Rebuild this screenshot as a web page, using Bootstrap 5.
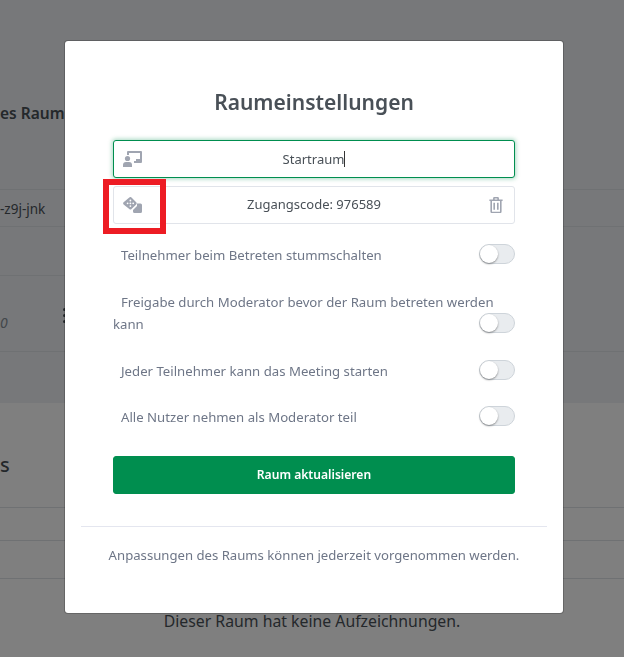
<!DOCTYPE html>
<html lang="de">
<head>
<meta charset="utf-8">
<link href="https://cdn.jsdelivr.net/npm/bootstrap@5.3.0/dist/css/bootstrap.min.css" rel="stylesheet">
<style>
html,body{height:657px;overflow:hidden}
body{background:#fff;font-family:"Noto Sans","Open Sans",sans-serif;color:#495057;font-size:14px}
.bg-page{height:657px;overflow:hidden;position:relative}
.band-a{height:403px;background:#eef1f4;padding-top:103px}
.band-title{font-size:15.5px;font-weight:600;line-height:20px;height:86px;white-space:nowrap}
.band-row{border-top:1px solid #dee2e6;height:37px;line-height:39px;white-space:nowrap;font-size:13.5px}
.band-gap{border-top:1px solid #dee2e6;height:49px}
.band-info{border-top:1px solid #dee2e6;height:76px;padding-top:36px;font-style:italic;color:#868e96;display:flex;justify-content:space-between;width:66px}
.kebab{display:flex;flex-direction:column;gap:3px;margin-top:-4px}
.kebab i{display:block;width:3px;height:3px;border-radius:50%;background:#495057}
.band-b{height:254px;padding-top:50px;position:relative}
.band-s{font-size:20px;font-weight:500;height:54px;line-height:24px}
.band-line{border-top:1px solid #dee2e6;height:33px}
.band-line2{height:38px;border-top:1px solid #dee2e6}
.band-none{border-top:1px solid #dee2e6;text-align:center;padding-top:30px;font-size:15.8px;line-height:24px}
.scrim{position:fixed;inset:0;background:rgba(0,0,0,.5);z-index:1}
.sheet{position:fixed;left:64px;top:40px;width:500px;height:574px;background:#fff;border:1px solid rgba(0,0,0,.2);background-clip:padding-box;border-radius:4px;z-index:2;padding:0 16px}
.sheet-title{font-size:21px;font-weight:600;color:#495057;text-align:center;margin:46px 0 23px;line-height:30px}
.sheet-form{padding:0 32px}
.room-field{height:38px;border:1px solid #e1e4ea;border-radius:3px;background:#fff;margin-bottom:8px;color:#495057}
.room-field.active{border-color:#008e4f;box-shadow:0 0 4px 1px rgba(0,142,79,.35)}
.room-field.active .room-text{padding-top:2px}
.room-ico{width:37px;flex:none;display:flex;justify-content:center}
.room-text{flex:1;text-align:center;font-size:13px;padding-right:37px}
.caret-bar{display:inline-block;width:1px;height:16px;background:#333;vertical-align:-3px}
.room-end{width:37px;flex:none;display:flex;justify-content:center;margin-left:-37px}
.opt{color:#6e7687;font-size:13.2px;line-height:22px;flex:1;text-indent:8px}
.opt-row{display:flex;align-items:flex-end;margin-top:25px}
.opt-row.first{margin-top:20px}
.opt-row.last{margin-top:24px}
.toggle-off{width:36px;height:20px;flex:none;border-radius:10px;background:#e9ecef;border:1px solid #ced4da;position:relative;margin-bottom:2px;margin-left:-36px}
.toggle-off::after{content:"";position:absolute;left:0;top:0;width:18px;height:18px;background:#fff;border-radius:50%;box-shadow:0 1px 2px rgba(0,0,0,.4)}
.save-btn{background:#008e4f;border-color:#008e4f;color:#fff;font-weight:600;font-size:12.1px;height:38px;border-radius:3px;width:100%;margin-top:28px}
.sheet-rule{border-top:1px solid #e4e6ef;margin:32px 0 18px;opacity:1}
.sheet-foot{text-align:center;color:#6e7687;font-size:13.15px;line-height:20px;margin:0}
.red-mark{position:fixed;left:103px;top:179px;width:63px;height:55px;border:6px solid #ed1c24;z-index:3}
</style>
</head>
<body>
<div class="bg-page">
  <div class="band-a">
    <div class="band-title">es Raum</div>
    <div class="band-row">-z9j-jnk</div>
    <div class="band-gap"></div>
    <div class="band-info"><span>0</span><span class="kebab"><i></i><i></i><i></i></span></div>
    <div class="band-gap"></div>
  </div>
  <div class="band-b">
    <div class="band-s">s</div>
    <div class="band-line"></div>
    <div class="band-line2"></div>
    <div class="band-none">Dieser Raum hat keine Aufzeichnungen.</div>
  </div>
</div>
<div class="scrim"></div>
<div class="sheet">
  <h5 class="sheet-title">Raumeinstellungen</h5>
  <div class="sheet-form">
    <div class="room-field active d-flex align-items-center">
      <span class="room-ico"><svg width="19" height="16" viewBox="0 0 19 16" fill="#a0a5b1"><path d="M5 0h13a1 1 0 0 1 1 1v10a1 1 0 0 1-1 1h-7v-2h2V8h4V2H6v2H4V1a1 1 0 0 1 1-1z"/><circle cx="4.5" cy="7.5" r="2.6"/><path d="M0 16v-2a3 3 0 0 1 3-3h3a3 3 0 0 1 3 3v2z"/></svg></span>
      <span class="room-text">Startraum<span class="caret-bar"></span></span>
    </div>
    <div class="room-field d-flex align-items-center">
      <span class="room-ico"><svg width="19" height="16" viewBox="0 0 19 16" fill="#a0a5b1"><path d="M6.300.5a1.600 1.600 0 0 1 2.200 0l4.700 4.700a1.600 1.600 0 0 1 0 2.200l-4.700 4.700a1.600 1.600 0 0 1-2.200 0L.6 7.400a1.600 1.600 0 0 1 0-2.200z"/><path d="M14 6.500h3.500A1.500 1.500 0 0 1 19 8v6.500a1.500 1.500 0 0 1-1.500 1.500h-6a1.500 1.500 0 0 1-1.500-1.500v-1.500l4-4z"/><g fill="#fff"><circle cx="7.400" cy="3.500" r=".9"/><circle cx="7.400" cy="6.300" r=".9"/><circle cx="7.400" cy="9.100" r=".9"/><circle cx="4.600" cy="6.300" r=".9"/><circle cx="10.200" cy="6.300" r=".9"/></g></svg></span>
      <span class="room-text">Zugangscode: 976589</span>
      <span class="room-end"><svg width="14" height="16" viewBox="0 0 13 15" fill="none" stroke="#a0a5b1" stroke-width="1.500"><path d="M.3 3h12.400M4.500 3V1.200A.7.700 0 0 1 5.200.6h2.600a.7.700 0 0 1 .7.600V3M2 3v10.500a1 1 0 0 0 1 1h7a1 1 0 0 0 1-1V3M4.800 5.500v6.500M8.200 5.500v6.500"/></svg></span>
    </div>
    <div class="opt-row first"><span class="opt">Teilnehmer beim Betreten stummschalten</span><span class="toggle-off"></span></div>
    <div class="opt-row"><span class="opt">Freigabe durch Moderator bevor der Raum betreten werden kann</span><span class="toggle-off"></span></div>
    <div class="opt-row"><span class="opt">Jeder Teilnehmer kann das Meeting starten</span><span class="toggle-off"></span></div>
    <div class="opt-row last"><span class="opt">Alle Nutzer nehmen als Moderator teil</span><span class="toggle-off"></span></div>
    <button type="button" class="btn save-btn">Raum aktualisieren</button>
  </div>
  <hr class="sheet-rule">
  <p class="sheet-foot">Anpassungen des Raums können jederzeit vorgenommen werden.</p>
</div>
<div class="red-mark"></div>
<script src="https://cdn.jsdelivr.net/npm/bootstrap@5.3.0/dist/js/bootstrap.bundle.min.js"></script>
</body>
</html>
